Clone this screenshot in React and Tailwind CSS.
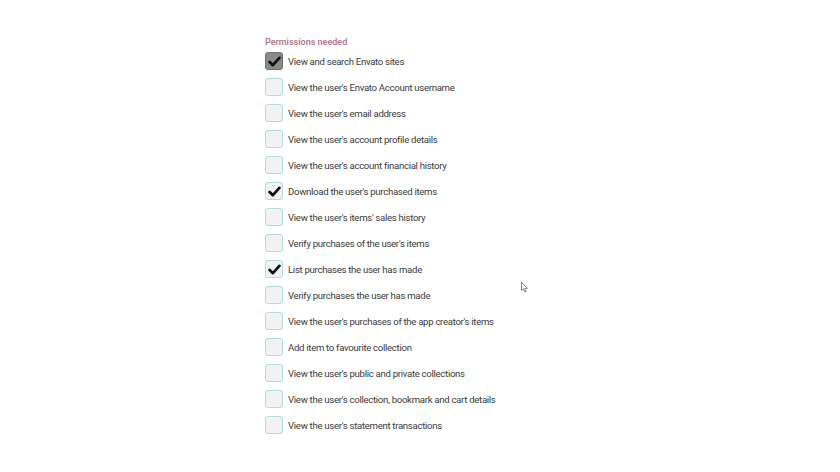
import React from "react";

const perms = [
  { label: "View and search Envato sites", state: "locked" },
  { label: "View the user's Envato Account username" },
  { label: "View the user's email address" },
  { label: "View the user's account profile details" },
  { label: "View the user's account financial history" },
  { label: "Download the user's purchased items", state: "on" },
  { label: "View the user's items' sales history" },
  { label: "Verify purchases of the user's items" },
  { label: "List purchases the user has made", state: "on" },
  { label: "Verify purchases the user has made" },
  { label: "View the user's purchases of the app creator's items" },
  { label: "Add item to favourite collection" },
  { label: "View the user's public and private collections" },
  { label: "View the user's collection, bookmark and cart details" },
  { label: "View the user's statement transactions" },
];

function Check() {
  return (
    <svg viewBox="0 0 16 16" className="w-[13px] h-[13px]">
      <path d="M2 8.5 L6 12.5 L14 3.5" fill="none" stroke="#111" strokeWidth="3.4" strokeLinecap="round" strokeLinejoin="round" />
    </svg>
  );
}

function Box({ state }) {
  if (state === "locked") {
    return (
      <div className="w-[18px] h-[18px] rounded-[3px] bg-[#8a8a8a] border border-[#707070] flex items-center justify-center shrink-0">
        <Check />
      </div>
    );
  }
  return (
    <div className="w-[18px] h-[18px] rounded-[3px] bg-[#f2f2f2] border border-[#b3dce1] flex items-center justify-center shrink-0">
      {state === "on" && <Check />}
    </div>
  );
}

export default function App() {
  return (
    <div className="relative w-[840px] h-[472px] bg-white font-['Roboto',sans-serif]">
      <div className="pl-[265px] pt-[36px]">
        <div className="text-[9px] font-semibold text-[#b27990] leading-[12px] mb-[4px]">Permissions needed</div>
        <div className="flex flex-col gap-[8px]">
          {perms.map((p) => (
            <div key={p.label} className="flex items-center gap-[5px] h-[18px]">
              <Box state={p.state} />
              <span className="mt-[2px] text-[9.6px] tracking-[-0.3px] text-[#3a3a3a]">{p.label}</span>
            </div>
          ))}
        </div>
      </div>
      <svg className="absolute left-[521px] top-[282px]" width="8" height="11" viewBox="0 0 8 11">
        <path d="M0.5 0.5 L0.5 8.5 L2.5 6.8 L4 10 L5.2 9.4 L3.8 6.4 L6.5 6.3 Z" fill="#fff" stroke="#666" strokeWidth="0.8" />
      </svg>
    </div>
  );
}
